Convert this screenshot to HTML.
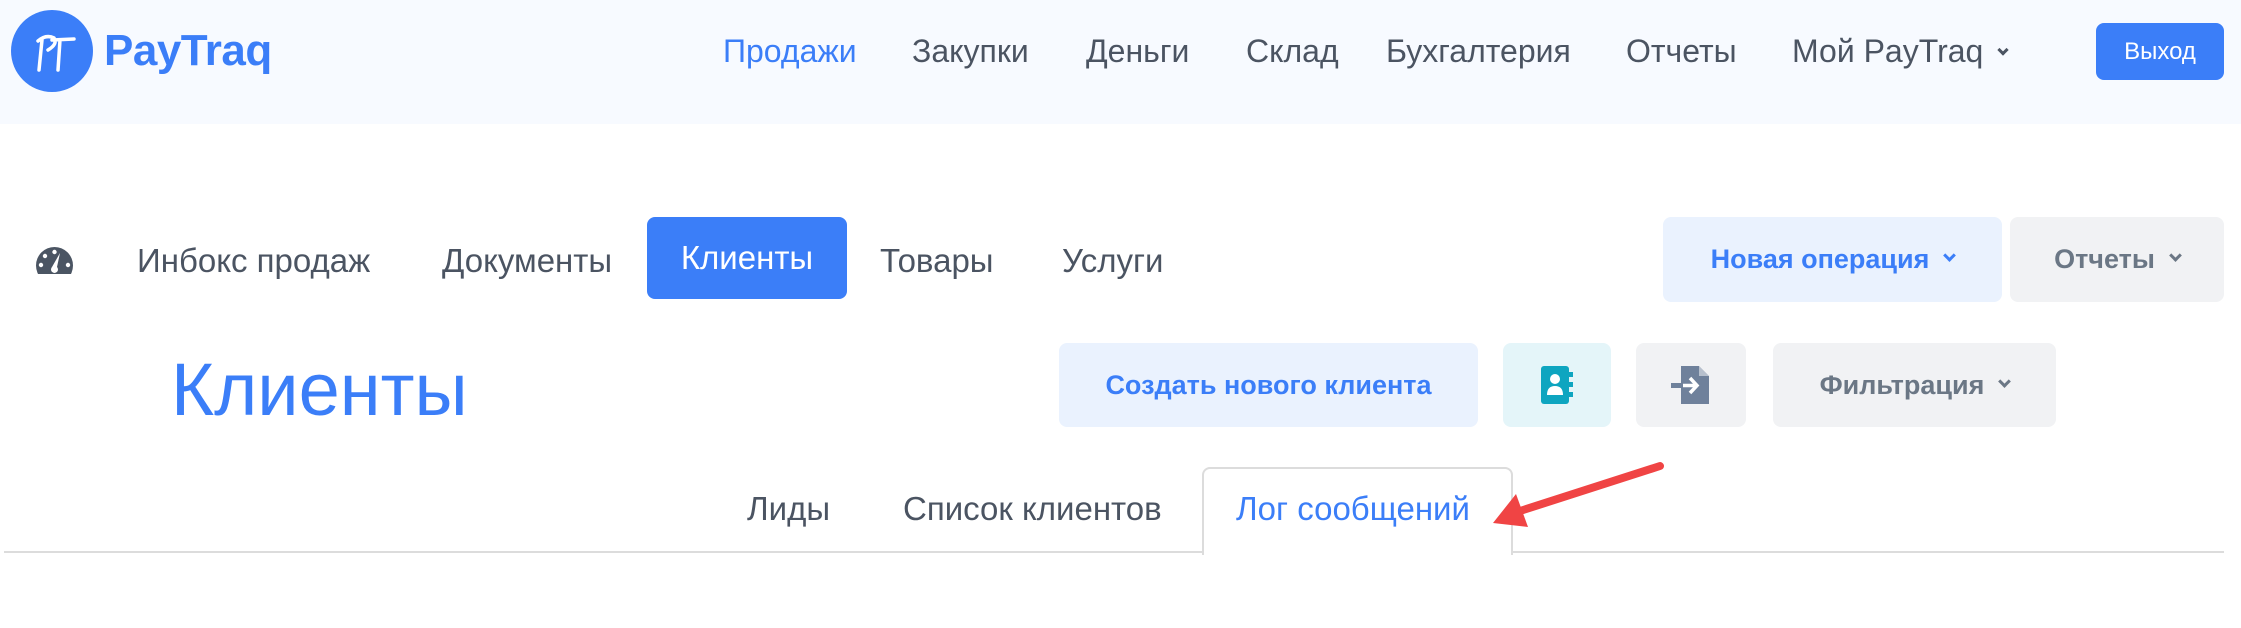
<!DOCTYPE html>
<html><head><meta charset="utf-8"><style>
*{margin:0;padding:0;box-sizing:border-box}
body{width:2241px;height:628px;background:#fff;font-family:"Liberation Sans","DejaVu Sans",sans-serif;position:relative;overflow:hidden;color:#4b5462}
.a{position:absolute;white-space:nowrap}
.hdr{position:absolute;left:0;top:0;width:2241px;height:124px;background:#f7faff}
.nav{font-size:32px;top:33px}
.t2{font-size:33px;top:242px}
.btn{position:absolute;border-radius:8px;display:flex;align-items:center;justify-content:center;font-weight:bold;font-size:27px}
.chev{display:inline-block;width:9px;height:9px;border-right:3px solid currentColor;border-bottom:3px solid currentColor;transform:rotate(45deg);margin-left:16px;margin-top:-8px}
</style></head><body>
<div class="hdr"></div>
<svg class="a" style="left:8px;top:8px" width="88" height="88" viewBox="0 0 88 88"><circle cx="44" cy="43" r="41" fill="#3b7ef8"/><path d="M30 33 Q38 26 46 30 Q50 36 40 42 M34 32 L31 62 M44 32 L66 31 M52 32 L50 62" stroke="#fff" stroke-width="3.5" fill="none" stroke-linecap="round"/></svg>
<div class="a" style="left:104px;top:26px;font-size:44px;font-weight:bold;color:#3b7ef8;letter-spacing:-0.5px">PayTraq</div>
<div class="a nav" style="left:723px;color:#3b7ef8">Продажи</div>
<div class="a nav" style="left:912px">Закупки</div>
<div class="a nav" style="left:1086px">Деньги</div>
<div class="a nav" style="left:1246px">Склад</div>
<div class="a nav" style="left:1386px">Бухгалтерия</div>
<div class="a nav" style="left:1626px">Отчеты</div>
<div class="a nav" style="left:1792px">Мой PayTraq<span class="chev" style="width:8px;height:8px;margin-left:16px;margin-top:0;vertical-align:8px"></span></div>
<div class="btn" style="left:2096px;top:23px;width:128px;height:57px;background:#3b7ef8;color:#fff;font-weight:normal;font-size:24px">Выход</div>

<svg class="a" style="left:36px;top:247px" width="37" height="27" viewBox="0 0 37 27"><circle cx="18.5" cy="18.5" r="18.5" fill="#4b5563"/><g fill="#fff"><circle cx="18.5" cy="5" r="2.2"/><circle cx="9" cy="9" r="2.2"/><circle cx="5" cy="18" r="2.2"/><circle cx="32" cy="18" r="2.2"/><path d="M24 6 L21 20 A3.5 3.5 0 1 1 16 20 Z"/></g></svg>
<div class="a t2" style="left:137px">Инбокс продаж</div>
<div class="a t2" style="left:442px">Документы</div>
<div class="btn" style="left:647px;top:217px;width:200px;height:82px;background:#3b7ef8;color:#fff;font-weight:normal;font-size:33px">Клиенты</div>
<div class="a t2" style="left:880px">Товары</div>
<div class="a t2" style="left:1062px">Услуги</div>
<div class="btn" style="left:1663px;top:217px;width:339px;height:85px;background:#eaf2fe;color:#3b7ef8">Новая операция<span class="chev"></span></div>
<div class="btn" style="left:2010px;top:217px;width:214px;height:85px;background:#f1f2f4;color:#6b7785">Отчеты<span class="chev"></span></div>

<div class="a" style="left:171px;top:347px;font-size:74px;color:#3b7ef8">Клиенты</div>
<div class="btn" style="left:1059px;top:343px;width:419px;height:84px;background:#eaf2fe;color:#3b7ef8">Создать нового клиента</div>
<div class="btn" style="left:1503px;top:343px;width:108px;height:84px;background:#e4f5f9">
<svg width="32" height="38" viewBox="0 0 32 38"><rect x="0" y="0" width="28" height="38" rx="3" fill="#0ea5c0"/><rect x="28" y="6" width="4" height="5" fill="#0ea5c0"/><rect x="28" y="16" width="4" height="5" fill="#0ea5c0"/><rect x="28" y="26" width="4" height="5" fill="#0ea5c0"/><circle cx="14" cy="13" r="5" fill="#fff"/><path d="M6 29 Q6 20 14 20 Q22 20 22 29 Z" fill="#fff"/></svg></div>
<div class="btn" style="left:1636px;top:343px;width:110px;height:84px;background:#f1f2f4">
<svg width="40" height="38" viewBox="0 0 40 38"><path d="M10 0 H28 L38 10 V38 H10 Z" fill="#6f819b"/><path d="M28 0 V10 H38" fill="#fff" opacity=".5"/><rect x="0" y="17" width="22" height="5" fill="#6f819b"/><path d="M12 19.5 H24 M19 12 L26 19.5 L19 27" stroke="#fff" stroke-width="3.5" fill="none"/></svg></div>
<div class="btn" style="left:1773px;top:343px;width:283px;height:84px;background:#f1f2f4;color:#6b7785">Фильтрация<span class="chev"></span></div>

<div class="a" style="left:4px;top:551px;width:2220px;height:2px;background:#dcdcdc"></div>
<div class="a" style="left:1202px;top:467px;width:311px;height:88px;background:#fff;border:2px solid #dcdcdc;border-bottom:none;border-radius:8px 8px 0 0"></div>
<div class="a" style="left:747px;top:490px;font-size:33px">Лиды</div>
<div class="a" style="left:903px;top:490px;font-size:33px">Список клиентов</div>
<div class="a" style="left:1236px;top:490px;font-size:33px;color:#3b7ef8">Лог сообщений</div>
<svg class="a" style="left:1480px;top:455px" width="200" height="90" viewBox="0 0 200 90"><path d="M180 11 L40 56" stroke="#f04444" stroke-width="8" stroke-linecap="round"/><path d="M13 68 L36 39 L48 72 Z" fill="#f04444"/></svg>
</body></html>
